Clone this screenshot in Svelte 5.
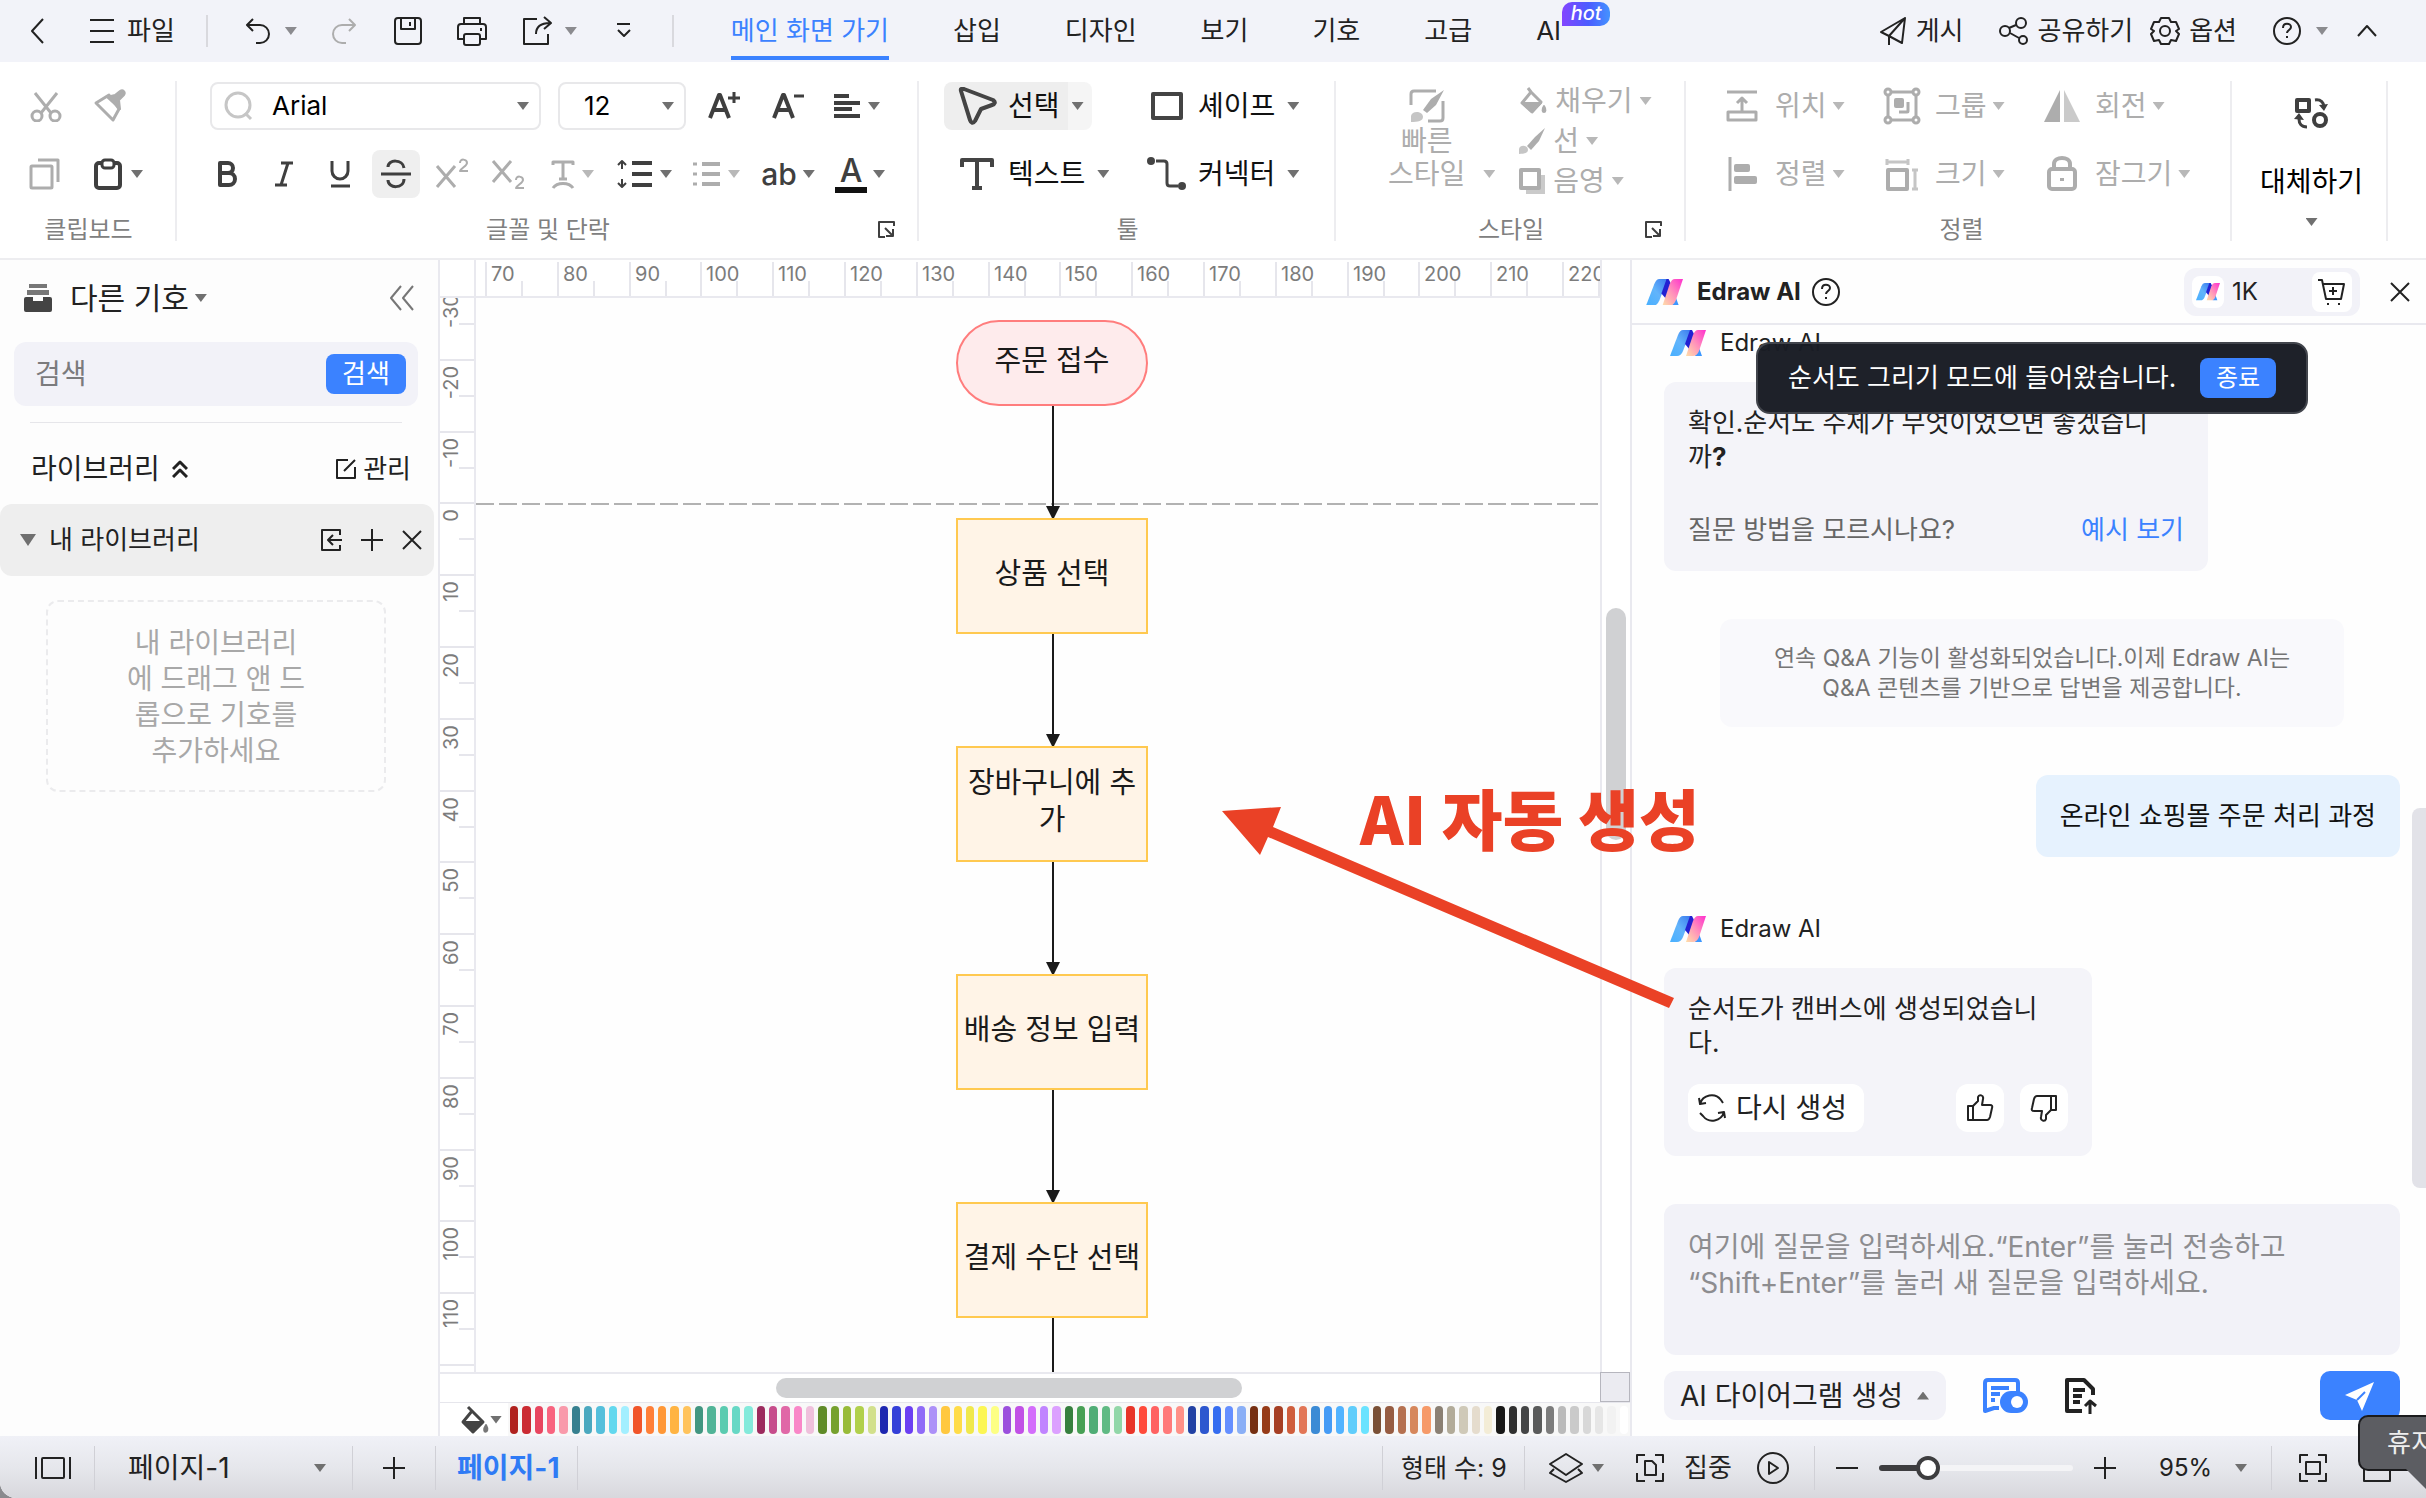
<script lang="ts">
	type Node = { text: string; kind: 'start' | 'step'; y: number; h: number };

	// width, height, body; stroked by default, solid parts set their own fill
	const icons: Record<string, [number, number, string]> = {
		back: [16, 28, '<path d="M14 2 3 14l11 12"/>'],
		menu: [26, 26, '<path d="M1 2h24M1 13h24M1 24h24"/>'],
		undo: [28, 28, '<path d="M9 2 3 8l6 6M3 8h13a9 9 0 0 1 0 18h-4"/>'],
		redo: [28, 28, '<path d="m19 2 6 6-6 6M25 8H12a9 9 0 0 0 0 18h4"/>'],
		save: [30, 30, '<rect x="2" y="2" width="26" height="26" rx="3"/><path d="M8 2v11h14V2M17 6v4"/>'],
		print: [32, 30, '<path d="M8 8V2h16v6M7 23H2V11a3 3 0 0 1 3-3h22a3 3 0 0 1 3 3v12h-5M25 12v3"/><rect x="8" y="18" width="16" height="11" rx="2"/>'],
		export: [32, 30, '<path d="M15 3H2v25h24V18M14 18c0-7 5-11 14-11M22 1l7 6-7 6"/>'],
		more: [16, 18, '<path d="M1 2h13M2 8l6 6 6-6"/>'],
		plane: [28, 30, '<path d="M26 2 2 16l8 4 13 7ZM26 2 10 20v9"/>'],
		share: [30, 30, '<circle cx="7" cy="15" r="5"/><circle cx="23" cy="7" r="5"/><circle cx="25" cy="24" r="4"/><path d="m11 12 7-3M12 17l9 5"/>'],
		gear: [30, 30, '<path d="M11 2h8l2 4 5 0 3 7-3 2 3 3-3 7-5-1-2 4h-8l-2-4-5 1-3-7 3-3-3-2 3-7 5 0Z"/><circle cx="15" cy="15" r="5"/>'],
		help: [30, 30, '<circle cx="15" cy="15" r="13"/><path d="M11 12c0-6 8-5 8-1 0 3-4 3-4 6M15 20v2"/>'],
		up: [22, 14, '<path d="m2 12 9-10 9 10"/>'],
		cut: [34, 32, '<path d="m6 3 16 20M28 3 12 23" stroke-width="3"/><circle cx="8" cy="26" r="5" stroke-width="3"/><circle cx="26" cy="26" r="5" stroke-width="3"/>'],
		brush: [36, 34, '<path d="M3 14 16 6l10 14-6 11Z" stroke-width="3"/><path d="m14 8 8-2 5-4c3-2 6 1 4 4l-5 5 1 9Z" fill="currentColor"/>'],
		copy: [32, 32, '<rect x="2" y="8" width="21" height="22" rx="1" stroke-width="3"/><path d="M9 2h20v22" stroke-width="3"/>'],
		paste: [30, 32, '<rect x="3" y="5" width="24" height="25" rx="3" stroke-width="4"/><rect x="9" y="2" width="12" height="8" rx="3" fill="#fff" stroke-width="3"/>'],
		search: [30, 30, '<circle cx="14" cy="14" r="12" stroke-width="3"/><path d="m21 22 6 6" stroke-width="3"/>'],
		bigger: [34, 30, '<path d="M3 27 12 4h1l9 23M6 19h13" stroke-width="4"/><path d="M27 1v11M21 7h12" stroke-width="3"/>'],
		smaller: [34, 30, '<path d="M3 27 12 4h1l9 23M6 19h13" stroke-width="4"/><path d="M23 5h10" stroke-width="3"/>'],
		align: [30, 24, '<path d="M2 2h15M2 9h26M2 15h18M2 22h26" stroke-width="4"/>'],
		bold: [24, 28, '<path d="M4 3v22h9a6 6 0 0 0 0-12H4h8a5 5 0 0 0 0-10Z" stroke-width="4"/>'],
		italic: [24, 28, '<path d="M9 3h12M3 25h12M16 3 9 25" stroke-width="3"/>'],
		underline: [24, 30, '<path d="M4 2v10a8 8 0 0 0 16 0V2M3 27h19" stroke-width="3"/>'],
		strike: [32, 30, '<path d="M24 9c-1-9-16-9-16-1M1 15h30M24 20c0 10-16 10-16 1" stroke-width="3"/>'],
		sup: [34, 32, '<path d="m2 8 18 21M20 8 2 29" stroke-width="3"/><path d="M25 5c0-5 7-4 7 0 0 3-6 5-7 8h8" stroke-width="2"/>'],
		sub: [34, 32, '<path d="M2 3 20 24M20 3 2 24" stroke-width="3"/><path d="M25 22c0-5 7-4 7 0 0 3-6 5-7 8h8" stroke-width="2"/>'],
		textfx: [26, 30, '<path d="M3 6V3h20v3M13 3v17M9 20h8M3 29c4-6 16-6 20 0" stroke-width="3"/>'],
		lines: [38, 30, '<path d="M16 4h20M16 15h20M16 26h20" stroke-width="4"/><path d="M6 2v8M2 6l4-4 4 4M6 20v8M2 24l4 4 4-4" stroke-width="2"/>'],
		bullets: [30, 26, '<path d="M10 3h18M10 13h18M10 23h18" stroke-width="4"/><path d="M1 3h4M1 13h4M1 23h4" stroke-width="3"/>'],
		pointer: [40, 38, '<path d="M4 4q-1-3 3-2l29 11c3 2 2 4-1 5l-11 4-6 12c-2 3-4 2-5-1Z" stroke-width="4"/>'],
		text: [36, 34, '<path d="M3 10V3h30v7M18 3v28M13 31h10" stroke-width="4"/>'],
		rect: [34, 30, '<rect x="3" y="3" width="28" height="24" stroke-width="4"/>'],
		connector: [42, 36, '<path d="M10 5h8q3 0 3 3v19q0 3 3 3h8" stroke-width="3"/><circle cx="5" cy="5" r="4" fill="currentColor" stroke="none"/><circle cx="36" cy="30" r="4" fill="currentColor" stroke="none"/>'],
		quick: [36, 34, '<path d="M2 16V5q0-3 3-3h22M34 12v17q0 3-3 3H19" stroke-width="3"/><path d="M35 1 22 10l-8 11 4 3 9-8Z" fill="currentColor" stroke="none"/><path d="M2 33v-6c1-6 12-5 12 1 0 4-5 5-12 5Z" fill="currentColor" stroke="none" opacity=".7"/>'],
		fill: [30, 30, '<path d="m10 2 3 4-9 11 10 9 9-10-10-10" stroke-width="3"/><path d="m5 17 9 9 9-9Z" fill="currentColor"/><path d="M26 20c5 8-5 8 0 0Z" fill="currentColor"/>'],
		line: [28, 28, '<path d="M27 1 17 10l-8 9 4 4 8-9Z" fill="currentColor" stroke="none"/><path d="M1 27v-5c1-5 9-4 9 1 0 3-4 4-9 4Z" fill="currentColor" stroke="none" opacity=".7"/>'],
		shadow: [28, 28, '<path d="M8 8h19v19H8Z" fill="currentColor" stroke="none" opacity=".65"/><rect x="3" y="3" width="18" height="18" fill="#fff" stroke-width="4"/>'],
		position: [34, 34, '<path d="M2 3h30M17 22V10M12 14l5-5 5 5" stroke-width="3"/><rect x="3" y="23" width="28" height="8" stroke-width="3"/>'],
		group: [38, 38, '<rect x="5" y="5" width="28" height="28" stroke-width="3"/><circle cx="5" cy="5" r="3" fill="#fff" stroke-width="3"/><circle cx="33" cy="5" r="3" fill="#fff" stroke-width="3"/><circle cx="5" cy="33" r="3" fill="#fff" stroke-width="3"/><circle cx="33" cy="33" r="3" fill="#fff" stroke-width="3"/><rect x="11" y="11" width="10" height="10" rx="2" fill="currentColor" stroke="none"/><path d="M25 15v9q0 1-1 1h-8" stroke-width="3"/>'],
		flip: [38, 34, '<path d="M17 1v32H1Z" fill="currentColor" stroke="none"/><path d="M21 1v32h16Z" fill="currentColor" stroke="none" opacity=".65"/>'],
		alignobj: [34, 36, '<path d="M5 1v34" stroke-width="3"/><rect x="9" y="8" width="16" height="8" rx="2" fill="currentColor" stroke="none"/><rect x="9" y="20" width="23" height="8" rx="2" fill="currentColor" stroke="none"/>'],
		size: [36, 34, '<rect x="4" y="13" width="19" height="19" stroke-width="4"/><path d="M3 5h21M3 2v6M24 2v6M31 13v19M28 13h6M28 32h6" stroke-width="3" opacity=".7"/>'],
		lock: [34, 36, '<rect x="4" y="13" width="26" height="20" rx="3" stroke-width="4"/><path d="M9 13V8c0-8 16-8 16 0v5M17 22v3" stroke-width="4"/>'],
		replace: [36, 34, '<rect x="3" y="4" width="12" height="11" stroke-width="4"/><circle cx="26" cy="24" r="6" stroke-width="4"/><path d="M21 4c6-1 9 3 9 7M13 31c-6 0-8-4-8-8" stroke-width="3"/><path d="m25 9 9-1-4 7ZM0 23l10 1-5-7Z" fill="currentColor" stroke="none"/>'],
		launcher: [18, 18, '<path d="M8 17H2V2h15v4M8 8l8 8M16 9v7H9"/>'],
		tray: [28, 28, '<path d="M5 0h18v4H5Z" fill="#777" stroke="none"/><path d="M3 6h22v5H3Z" fill="#777" stroke="none"/><path d="M2 13h7v4h10v-4h7q2 0 2 2v11q0 2-2 2H2q-2 0-2-2V15q0-2 2-2Z" fill="#444" stroke="none"/>'],
		collapse: [26, 26, '<path d="M12 1 2 13l10 12M24 1 14 13l10 12"/>'],
		dblup: [16, 18, '<path d="m1 9 7-7 7 7M1 17l7-7 7 7" stroke-width="3"/>'],
		manage: [22, 22, '<path d="M13 2H2v18h18V9M9 13 20 2"/>'],
		import: [24, 24, '<path d="M20 7V2H2v20h18v-5M22 12H8M13 7l-5 5 5 5"/>'],
		plus: [24, 24, '<path d="M12 1v22M1 12h22"/>'],
		close: [24, 24, '<path d="m3 3 18 18M21 3 3 21"/>'],
		cart: [30, 30, '<path d="M1 3h4l4 19h15l3-15H6M16 10v8M12 14h8M11 26v2M22 26v2"/>'],
		refresh: [30, 30, '<path d="M3 11a12 12 0 0 1 21-4l2 3M27 19a12 12 0 0 1-21 4l-3-3M2 5l1 6 6-1M28 25l-1-6-6 1"/>'],
		like: [28, 28, '<path d="M2 12h5v14H2ZM7 12l5-5V3c1-3 6-2 5 2l-1 6h8q3 0 2 3l-2 9q-1 3-3 3H7"/>'],
		dislike: [28, 28, '<path d="M26 16h-5V2h5ZM21 16l-5 5v4c-1 3-6 2-5-2l1-6H4q-3 0-2-3l2-9q1-3 3-3h14"/>'],
		bot: [46, 36, '<path d="M36 14V5q0-3-3-3H6Q3 2 3 5v28l9-3h5M9 10h18M9 16h9M9 22h4" stroke-width="4"/><rect x="18" y="13" width="28" height="22" rx="11" fill="currentColor" stroke="none"/><circle cx="35" cy="24" r="6" fill="#fff" stroke="none"/>'],
		upload: [34, 38, '<path d="M18 34H3V3h17l9 9v6M9 13h12M9 19h9M9 25h7" stroke-width="4"/><path d="M26 37V25M21 29l5-5 6 5" stroke-width="3"/>'],
		send: [30, 30, '<path d="M29 1 0 14l12 5 5 11Z" fill="currentColor" stroke="none"/><path d="m12 19 8-8" stroke="#3b82ff"/>'],
		bucket: [30, 30, '<path d="m8 2 4 4-9 11 10 10 10-10L12 6" stroke-width="3"/><path d="m3 17 10 10 10-10Z" fill="currentColor"/><path d="M26 20c5 9-6 9 0 0Z" fill="#777" stroke="#777"/>'],
		pages: [36, 24, '<rect x="7" y="2" width="22" height="20" rx="1"/><path d="M1 1v22M35 1v22"/>'],
		layers: [36, 32, '<path d="M18 2 34 12 18 23 2 12ZM6 17l-4 4 16 9 16-9-4-4"/>'],
		focus: [30, 30, '<path d="M10 2H2v8M20 2h8v8M10 28H2v-8M20 28h8v-8M10 8h7l4 4v10H10Z"/>'],
		play: [34, 34, '<circle cx="17" cy="17" r="15"/><path d="m13 11 9 6-9 6Z"/>'],
		minus: [24, 24, '<path d="M1 12h22"/>'],
		fit: [30, 30, '<path d="M10 2H2v8M20 2h8v8M10 28H2v-8M20 28h8v-8"/><rect x="8" y="9" width="14" height="12"/>'],
		window: [30, 30, '<path d="M2 2h26v26H2Z"/>']
	};

	const tabs = ['삽입', '디자인', '보기', '기호', '고급'];
	const arrange = [
		['position', '위치'],
		['group', '그룹'],
		['flip', '회전'],
		['alignobj', '정렬'],
		['size', '크기'],
		['lock', '잠그기']
	];

	const nodes: Node[] = [
		{ text: '주문 접수', kind: 'start', y: 22, h: 86 },
		{ text: '상품 선택', kind: 'step', y: 220, h: 116 },
		{ text: '장바구니에 추가', kind: 'step', y: 448, h: 116 },
		{ text: '배송 정보 입력', kind: 'step', y: 676, h: 116 },
		{ text: '결제 수단 선택', kind: 'step', y: 904, h: 116 },
		{ text: '', kind: 'step', y: 1132, h: 116 }
	];

	const step = 71.8;
	const hTicks = Array.from({ length: 16 }, (_, i) => ({ label: 70 + i * 10, at: Math.round(10 + i * step) }));
	const vTicks = Array.from({ length: 16 }, (_, i) => ({ label: -30 + i * 10, at: Math.round(-10 + i * step) }));

	const palette = (
		'b0221f cb2b33 e8455f f8647f f99aab 37808f 4ba8bf 55bfdb 63d8ee a3efff ' +
		'f1552a ff7f38 ff9736 ffb443 ffc35c 429681 51b497 5bcbb0 67d8c5 84eadb ' +
		'9c2b5e c64c8b e068a7 f987c8 efc0dc 5f8b28 76a12e 98bb38 b1d04c d2e08c ' +
		'1e27b0 3540d8 6b3ff2 8f6bf7 ad91f8 ffc840 ffdc48 f0e84c fcf654 fdff84 ' +
		'9b50dd c151e6 d36dfb c084ff dca0ff 37803f 48a055 50ad76 60ba84 92d7a8 ' +
		'e83529 ff4b3b ff6262 ff7a7a ff9087 2241a3 2d57cf 356df0 658fff 8aaff6 ' +
		'752f12 963b18 a63f24 cf5e3d e27656 3c8bd5 459bf5 52b3ff 60cdfb 6ae3ff ' +
		'7a5036 965c42 b57150 d6875c f69a69 8b8074 b2ab99 cfc9b8 e5dccd f3ecd6 ' +
		'171717 303030 444546 5a5b5b 7c7c7c bababa cacaca d8d8d8 e6e6e6 f2f2f2 ffffff'
	).split(' ');

	let zoom = $state(22);
	let query = $state('');
	let question = $state('');
</script>

{#snippet icon(name: string)}
	{@const [w, h, body] = icons[name]}
	<svg class="icon" width={w} height={h} viewBox="0 0 {w} {h}" aria-hidden="true">{@html body}</svg>
{/snippet}

{#snippet logo(w: number)}
	<svg class="logo" width={w} viewBox="0 0 36 26" aria-hidden="true">
		<defs>
			<linearGradient id="lg-blue" x1="1" y1="0" x2="0" y2="1">
				<stop offset="0" stop-color="#3a78ee" /><stop offset=".5" stop-color="#62b4fb" /><stop offset="1" stop-color="#48b0ff" />
			</linearGradient>
			<linearGradient id="lg-pink" x1="1" y1="0" x2="0" y2="1">
				<stop offset="0" stop-color="#ff2fce" /><stop offset=".5" stop-color="#ff8fbb" /><stop offset="1" stop-color="#ffe0a8" />
			</linearGradient>
		</defs>
		<path d="M28 15l4 11h-7z" fill="#3c97ff" />
		<path d="M13 0h8l-8 21q-2 5-6 5H0L8 5q2-5 5-5z" fill="url(#lg-blue)" />
		<path d="M20 0h2l3 6-5 14-5-6z" fill="#2320d2" />
		<path d="M28 0h8l-7 21q-2 5-6 5h-7l7-21q2-5 5-5z" fill="url(#lg-pink)" />
	</svg>
{/snippet}

{#snippet caret()}<span class="caret"></span>{/snippet}

<div class="app">
	<header class="topbar">
		<button class="back" aria-label="뒤로">{@render icon('back')}</button>
		<button class="file">{@render icon('menu')}파일</button>
		<span class="sep"></span>
		<div class="quick-access">
			<button class="wide" aria-label="실행 취소"><span>{@render icon('undo')}</span>{@render caret()}</button>
			<button class="off" aria-label="다시 실행">{@render icon('redo')}</button>
			<button aria-label="저장">{@render icon('save')}</button>
			<button aria-label="인쇄">{@render icon('print')}</button>
			<button class="wide" aria-label="내보내기"><span>{@render icon('export')}</span>{@render caret()}</button>
			<button aria-label="더 보기">{@render icon('more')}</button>
		</div>
		<span class="sep"></span>
		<nav class="tabs">
			<button class="active">메인 화면 가기</button>
			{#each tabs as tab}
				<button>{tab}</button>
			{/each}
			<button>AI<em class="hot">hot</em></button>
		</nav>
		<div class="top-actions">
			<button>{@render icon('plane')}게시</button>
			<button class="spaced">{@render icon('share')}공유하기</button>
			<button>{@render icon('gear')}옵션</button>
			<button class="spaced help" aria-label="도움말">{@render icon('help')}{@render caret()}</button>
			<button class="last" aria-label="리본 접기">{@render icon('up')}</button>
		</div>
	</header>

	<section class="ribbon">
		<div class="group clipboard">
			<div class="row off">
				<button aria-label="잘라내기">{@render icon('cut')}</button>
				<button aria-label="서식 복사">{@render icon('brush')}</button>
			</div>
			<div class="row">
				<button class="off" aria-label="복사">{@render icon('copy')}</button>
				<button aria-label="붙여넣기">{@render icon('paste')}{@render caret()}</button>
			</div>
			<h2>클립보드</h2>
		</div>

		<div class="group font">
			<div class="row">
				<label class="combo family">
					{@render icon('search')}
					<select aria-label="글꼴"><option>Arial</option></select>
					{@render caret()}
				</label>
				<label class="combo points">
					<select aria-label="글꼴 크기"><option>12</option></select>
					{@render caret()}
				</label>
				<button class="mid" aria-label="글꼴 크게">{@render icon('bigger')}</button>
				<button class="mid" aria-label="글꼴 작게">{@render icon('smaller')}</button>
				<button class="drop" aria-label="맞춤">{@render icon('align')}{@render caret()}</button>
			</div>
			<div class="row">
				<button class="cell" aria-label="굵게">{@render icon('bold')}</button>
				<button class="cell" aria-label="기울임">{@render icon('italic')}</button>
				<button class="cell" aria-label="밑줄">{@render icon('underline')}</button>
				<button class="cell on" aria-label="취소선"><span>{@render icon('strike')}</span></button>
				<button class="cell off" aria-label="위 첨자">{@render icon('sup')}</button>
				<button class="cell off" aria-label="아래 첨자">{@render icon('sub')}</button>
				<button class="drop off" aria-label="텍스트 효과">{@render icon('textfx')}{@render caret()}</button>
				<button class="drop" aria-label="줄 간격">{@render icon('lines')}{@render caret()}</button>
				<button class="drop off" aria-label="글머리 기호">{@render icon('bullets')}{@render caret()}</button>
				<button class="drop case">ab{@render caret()}</button>
				<button class="drop" aria-label="글꼴 색"><span class="ink">A</span>{@render caret()}</button>
			</div>
			<h2>글꼴 및 단락</h2>
			<button class="launch" aria-label="글꼴 설정">{@render icon('launcher')}</button>
		</div>

		<div class="group tools">
			<div class="row">
				<button class="tool picked"><span class="glyph">{@render icon('pointer')}</span>선택{@render caret()}</button>
				<button class="tool"><span class="glyph">{@render icon('rect')}</span>셰이프{@render caret()}</button>
			</div>
			<div class="row">
				<button class="tool"><span class="glyph">{@render icon('text')}</span>텍스트{@render caret()}</button>
				<button class="tool"><span class="glyph">{@render icon('connector')}</span>커넥터{@render caret()}</button>
			</div>
			<h2>툴</h2>
		</div>

		<div class="group style">
			<div class="body off">
				<button class="quick-style">
					{@render icon('quick')}
					<span>빠른<br />스타일</span>
				</button>
				<span class="quick-caret">{@render caret()}</span>
				<div class="stack">
					<button>{@render icon('fill')}채우기{@render caret()}</button>
					<button>{@render icon('line')}선{@render caret()}</button>
					<button>{@render icon('shadow')}음영{@render caret()}</button>
				</div>
			</div>
			<h2>스타일</h2>
			<button class="launch" aria-label="스타일 설정">{@render icon('launcher')}</button>
		</div>

		<div class="group arrange">
			<div class="grid off">
				{#each arrange as [name, label]}
					<button><span class="glyph">{@render icon(name)}</span>{label}{@render caret()}</button>
				{/each}
			</div>
			<h2>정렬</h2>
		</div>

		<div class="group replace">
			<button>{@render icon('replace')}<span>대체하기</span>{@render caret()}</button>
		</div>
	</section>

	<main class="workspace">
		<aside class="library">
			<div class="lib-head">
				{@render icon('tray')}
				<button class="title">다른 기호{@render caret()}</button>
				<button class="fold" aria-label="패널 접기">{@render icon('collapse')}</button>
			</div>
			<form class="search" onsubmit={(e) => e.preventDefault()}>
				<input type="text" aria-label="검색" placeholder="검색" bind:value={query} />
				<button>검색</button>
			</form>
			<hr />
			<div class="lib-bar">
				<button>라이브러리{@render icon('dblup')}</button>
				<button class="manage">{@render icon('manage')}관리</button>
			</div>
			<div class="my-lib">
				<button class="name"><span class="fold-mark"></span>내 라이브러리</button>
				<button aria-label="가져오기">{@render icon('import')}</button>
				<button aria-label="추가">{@render icon('plus')}</button>
				<button aria-label="닫기">{@render icon('close')}</button>
			</div>
			<p class="dropzone">내 라이브러리<br />에 드래그 앤 드<br />롭으로 기호를<br />추가하세요</p>
		</aside>

		<section class="editor">
			<div class="corner"></div>
			<svg class="ruler-h" width="100%" height="36">
				{#each hTicks as t}
					<path d="M{t.at} 2v36M{t.at + 36} 21v15" />
					<text x={t.at + 5} y="21">{t.label}</text>
				{/each}
			</svg>
			<div class="ruler-gap"></div>
			<div class="ruler-v">
				<svg width="34" height="100%">
					{#each vTicks as t}
						<path d="M0 {t.at}h34M19 {t.at + 36}h15" />
						<text transform="translate(18 {t.at + 6}) rotate(-90)">{t.label}</text>
					{/each}
				</svg>
			</div>
			<div class="canvas">
				<svg class="edges" width="100%" height="100%">
					<path class="page-edge" d="M0 206H4000" />
					{#each nodes.slice(1) as node, i}
						<path class="edge" d="M577 {nodes[i].y + nodes[i].h}V{node.y}" />
						<path d="M570 {node.y - 12}h14l-7 14z" />
					{/each}
				</svg>
				{#each nodes as node}
					<div class="node {node.kind}" style="top: {node.y}px; height: {node.h}px">{node.text}</div>
				{/each}
			</div>
			<div class="scroll-v"><span></span></div>
			<div class="scroll-h"><span></span></div>
			<div class="scroll-corner"></div>
			<div class="palette">
				<button class="bucket" aria-label="채우기 색">{@render icon('bucket')}{@render caret()}</button>
				<div class="swatches">
					{#each palette as c}
						<button aria-label="#{c}" style="background: #{c}"></button>
					{/each}
				</div>
			</div>
		</section>

		<aside class="ai">
			<header>
				{@render logo(37)}
				<h1>Edraw AI</h1>
				<button aria-label="도움말">{@render icon('help')}</button>
				<div class="credit">
					<span class="chip">{@render logo(24)}</span>
					<span>1K</span>
					<button aria-label="구매">{@render icon('cart')}</button>
				</div>
				<button class="close" aria-label="닫기">{@render icon('close')}</button>
			</header>

			<div class="chat">
				<p class="sender">{@render logo(36)}Edraw AI</p>
				<div class="bubble first">
					<p>확인.순서도 주제가 무엇이었으면 좋겠습니<br />까<b>?</b></p>
					<div class="hint"><span>질문 방법을 모르시나요?</span><a href="#example">예시 보기</a></div>
				</div>
				<p class="notice">연속 Q&amp;A 기능이 활성화되었습니다.이제 Edraw AI는<br />Q&amp;A 콘텐츠를 기반으로 답변을 제공합니다.</p>
				<p class="mine">온라인 쇼핑몰 주문 처리 과정</p>
				<p class="sender">{@render logo(36)}Edraw AI</p>
				<div class="bubble second">
					<p>순서도가 캔버스에 생성되었습니<br />다.</p>
					<div class="feedback">
						<button class="again">{@render icon('refresh')}다시 생성</button>
						<button aria-label="좋아요">{@render icon('like')}</button>
						<button aria-label="싫어요">{@render icon('dislike')}</button>
					</div>
				</div>
				<span class="chat-thumb"></span>
			</div>

			<div class="composer">
				<textarea
					aria-label="질문"
					placeholder="여기에 질문을 입력하세요.“Enter”를 눌러 전송하고 “Shift+Enter”를 눌러 새 질문을 입력하세요."
					bind:value={question}
				></textarea>
				<div class="composer-bar">
					<label class="mode">
						<select aria-label="생성 모드"><option>AI 다이어그램 생성</option></select>
						<span class="caret flip"></span>
					</label>
					<button class="blue" aria-label="연속 대화">{@render icon('bot')}</button>
					<button aria-label="파일 올리기">{@render icon('upload')}</button>
					<button class="send" aria-label="전송">{@render icon('send')}</button>
				</div>
			</div>

			<div class="toast" role="status">
				순서도 그리기 모드에 들어왔습니다.
				<button>종료</button>
			</div>
		</aside>
	</main>

	<footer class="status">
		<button class="pages" aria-label="페이지 목록">{@render icon('pages')}</button>
		<span class="sep"></span>
		<label class="page-select">
			<select aria-label="페이지"><option>페이지-1</option></select>
			{@render caret()}
		</label>
		<span class="sep"></span>
		<button class="add" aria-label="페이지 추가">{@render icon('plus')}</button>
		<span class="sep"></span>
		<button class="page-tab">페이지-1</button>
		<span class="sep"></span>
		<div class="status-right">
			<span class="sep"></span>
			<span class="count">형태 수: 9</span>
			<span class="sep"></span>
			<button class="layers" aria-label="레이어">{@render icon('layers')}{@render caret()}</button>
			<button class="focus">{@render icon('focus')}집중</button>
			<button class="play" aria-label="재생">{@render icon('play')}</button>
			<span class="sep"></span>
			<div class="zoom">
				<button aria-label="축소">{@render icon('minus')}</button>
				<input type="range" aria-label="확대/축소" min="0" max="100" bind:value={zoom} />
				<button aria-label="확대">{@render icon('plus')}</button>
			</div>
			<label class="percent">
				<select aria-label="배율"><option>95%</option></select>
				{@render caret()}
			</label>
			<span class="sep"></span>
			<button class="view" aria-label="화면에 맞춤">{@render icon('fit')}</button>
			<button class="view" aria-label="전체 화면">{@render icon('window')}</button>
		</div>
	</footer>

	<svg class="pointer-arrow" width="460" height="200" viewBox="0 0 460 200" aria-hidden="true">
		<path d="M0 4 59 0 51 20 452 191 447 201 46 30 38 48z" />
	</svg>
	<p class="callout">AI 자동 생성</p>
	<div class="dock-tip">휴지통</div>
</div>

<style>
	:global(body) {
		margin: 0;
		background: #8a8a8e;
	}
	.app,
	.app :global(*) {
		box-sizing: border-box;
	}
	.app {
		position: relative;
		display: flex;
		flex-direction: column;
		min-height: 100vh;
		overflow: hidden;
		background: #fff;
		border-bottom-left-radius: 16px;
		color: #222;
		font: 26px/34px Inter, 'Noto Sans CJK KR', sans-serif;
		white-space: nowrap;
	}
	button,
	input,
	select,
	textarea {
		font: inherit;
		color: inherit;
		background: none;
		border: 0;
		padding: 0;
		margin: 0;
		outline: 0;
	}
	button {
		display: flex;
		align-items: center;
	}
	select {
		appearance: none;
		flex: 1;
		min-width: 0;
	}
	p,
	h1,
	h2 {
		margin: 0;
		font-weight: 400;
	}
	.icon,
	.logo {
		display: block;
		flex: none;
	}
	.icon {
		fill: none;
		stroke: currentColor;
		stroke-width: 2;
		stroke-linejoin: round;
	}
	.caret {
		flex: none;
		width: 12px;
		height: 8px;
		background: #707070;
		clip-path: polygon(0 0, 100% 0, 50% 100%);
	}
	.caret.flip {
		clip-path: polygon(50% 0, 100% 100%, 0 100%);
	}
	.off {
		color: #adadad;
	}
	.off .caret {
		background: #b8b8b8;
	}
	.sep {
		flex: none;
		width: 2px;
		height: 32px;
		background: #d9d9de;
	}

	/* top bar */
	.topbar {
		display: flex;
		align-items: center;
		height: 62px;
		padding: 0 48px 0 29px;
		background: #f2f3f9;
	}
	.file {
		gap: 12px;
		margin: 0 31px 0 44px;
	}
	.quick-access {
		display: flex;
		margin: 0 16px;
	}
	.quick-access button {
		width: 64px;
		height: 48px;
		justify-content: center;
	}
	.quick-access .wide {
		width: 88px;
		padding-left: 7px;
		justify-content: flex-start;
	}
	.wide span:first-child {
		display: flex;
		justify-content: center;
		width: 54px;
	}
	.topbar .caret {
		background: #8b8b8f;
	}
	.tabs {
		display: flex;
		gap: 64px;
		margin-left: 57px;
		align-self: stretch;
	}
	.tabs button {
		position: relative;
	}
	.tabs .active {
		color: #3b82ff;
	}
	.tabs .active::after {
		content: '';
		position: absolute;
		inset: auto 0 2px;
		height: 4px;
		background: #3b82ff;
	}
	.hot {
		position: absolute;
		left: 26px;
		top: 2px;
		width: 48px;
		height: 24px;
		border-radius: 10px 10px 10px 0;
		background: linear-gradient(90deg, #8344ff, #4b5cff 55%, #4493ff);
		color: #fff;
		font-size: 20px;
		line-height: 23px;
		font-weight: 500;
		text-align: center;
	}
	.top-actions {
		display: flex;
		align-items: center;
		gap: 17px;
		margin-left: auto;
	}
	.top-actions button {
		gap: 9px;
	}
	.top-actions .spaced {
		margin-left: 18px;
	}
	.top-actions .help {
		gap: 14px;
	}
	.top-actions .last {
		margin-left: 11px;
	}

	/* ribbon */
	.ribbon {
		display: flex;
		height: 198px;
		padding-top: 10px;
		border-bottom: 2px solid #ededf0;
		font-size: 28px;
	}
	.group {
		position: relative;
		flex: none;
		display: flex;
		flex-direction: column;
		color: #3f3f3f;
	}
	.group::after {
		content: '';
		position: absolute;
		right: 0;
		top: 9px;
		width: 2px;
		height: 160px;
		background: #ededf0;
	}
	.group h2 {
		height: 44px;
		line-height: 44px;
		font-size: 24px;
		color: #808080;
		text-align: center;
	}
	.row {
		display: flex;
		align-items: center;
		height: 68px;
	}
	.launch {
		position: absolute;
		right: 24px;
		top: 148px;
	}
	.clipboard {
		width: 177px;
	}
	.clipboard .row {
		gap: 30px;
		padding-left: 29px;
	}
	.clipboard .row .off,
	.clipboard .row.off button:first-child {
		width: 34px;
	}
	.clipboard button {
		gap: 8px;
	}
	.font {
		width: 742px;
	}
	.font .row {
		padding-left: 23px;
	}
	.combo {
		display: flex;
		align-items: center;
		height: 48px;
		border: 2px solid #e8e8ea;
		border-radius: 8px;
		color: #000;
		font-size: 26px;
	}
	.combo .icon {
		color: #c6c6c6;
	}
	.family {
		width: 331px;
		margin: 0 17px 0 10px;
		padding: 0 10px 0 12px;
		gap: 18px;
	}
	.points {
		width: 128px;
		margin-right: 6px;
		padding: 0 10px 0 24px;
	}
	.mid,
	.cell,
	.drop {
		justify-content: center;
		width: 64px;
		height: 48px;
	}
	.cell {
		width: 56px;
	}
	.drop {
		width: 72px;
		gap: 6px;
	}
	.on span {
		display: flex;
		align-items: center;
		justify-content: center;
		width: 48px;
		height: 48px;
		border-radius: 8px;
		background: #efefef;
	}
	.case {
		font-size: 30px;
		font-weight: 500;
	}
	.ink {
		width: 32px;
		border-bottom: 6px solid #111;
		font-size: 32px;
		line-height: 32px;
		font-weight: 500;
	}
	.tools {
		width: 417px;
		color: #111;
	}
	.tools .row {
		display: grid;
		grid-template-columns: 190px 190px;
		padding-left: 25px;
	}
	.tool {
		justify-self: start;
		height: 48px;
		gap: 12px;
		padding: 0 8px 0 14px;
		border-radius: 8px;
	}
	.tool.picked {
		background: linear-gradient(90deg, #eee 124px, #f5f5f5 124px);
	}
	.glyph {
		display: flex;
		justify-content: center;
		width: 38px;
		color: #444;
	}
	.off .glyph {
		color: inherit;
	}
	.style {
		width: 350px;
	}
	.style .body {
		display: flex;
		height: 136px;
		padding: 9px 0 0 52px;
	}
	.quick-style {
		flex-direction: column;
		padding-top: 8px;
		gap: 2px;
		line-height: 33px;
	}
	.quick-caret {
		padding: 89px 0 0 18px;
	}
	.quick-caret .caret {
		display: block;
	}
	.stack {
		padding-left: 23px;
	}
	.stack button {
		height: 40px;
		gap: 7px;
	}
	.arrange {
		width: 546px;
		padding-left: 37px;
	}
	.arrange .grid {
		display: grid;
		grid-template: 68px 68px / 160px 160px 200px;
	}
	.arrange .glyph {
		margin-right: 8px;
	}
	.arrange button {
		gap: 6px;
	}
	.arrange h2 {
		padding-right: 32px;
	}
	.replace {
		width: 156px;
		color: #000;
	}
	.replace button {
		flex-direction: column;
		padding: 24px 0 0 3px;
	}
	.replace .icon {
		color: #3f3f3f;
	}
	.replace span:not(.caret) {
		margin: 35px 0 19px;
	}

	/* library */
	.workspace {
		flex: 1;
		display: flex;
		min-height: 0;
	}
	.library {
		flex: none;
		width: 438px;
		background: #fdfdfd;
	}
	.lib-head {
		display: flex;
		align-items: center;
		height: 76px;
		padding: 0 23px 0 24px;
		font-size: 30px;
	}
	.lib-head .title {
		gap: 6px;
		margin: 0 auto 0 18px;
	}
	.fold {
		color: #777;
	}
	.search {
		display: flex;
		align-items: center;
		height: 64px;
		margin: 6px 20px 0 14px;
		padding: 0 12px 0 21px;
		border-radius: 12px;
		background: #f2f2f8;
	}
	.search input {
		flex: 1;
		min-width: 0;
		font-size: 28px;
	}
	input::placeholder {
		color: #7b7b7d;
	}
	.search button {
		justify-content: center;
		width: 80px;
		height: 40px;
		border-radius: 8px;
		background: #3b82ff;
		color: #fff;
	}
	hr {
		height: 1px;
		margin: 16px 36px 0 30px;
		border: 0;
		background: #e6e6ea;
	}
	.lib-bar {
		display: flex;
		align-items: center;
		justify-content: space-between;
		height: 81px;
		padding: 10px 27px 0 31px;
		font-size: 28px;
	}
	.lib-bar button {
		gap: 12px;
	}
	.lib-bar .manage {
		gap: 6px;
		font-size: 26px;
	}
	.my-lib {
		display: flex;
		align-items: center;
		gap: 16px;
		height: 72px;
		margin-right: 4px;
		padding: 0 10px 0 20px;
		border-radius: 12px;
		background: #eee;
	}
	.my-lib .name {
		margin-right: auto;
		gap: 13px;
	}
	.fold-mark {
		width: 16px;
		height: 12px;
		background: #6f6f6f;
		clip-path: polygon(0 0, 100% 0, 50% 100%);
	}
	.dropzone {
		margin: 24px 52px 0 46px;
		padding: 23px 0 21px;
		border: 2px dashed #ebebed;
		border-radius: 12px;
		color: #a8a8a8;
		font-size: 28px;
		line-height: 36px;
		text-align: center;
	}

	/* editor */
	.editor {
		flex: 1;
		min-width: 0;
		display: grid;
		grid-template: 38px minmax(0, 1fr) 30px 34px / 36px minmax(0, 1fr) 30px;
		border-left: 2px solid #e9e9ef;
	}
	.corner,
	.ruler-v {
		border-right: 2px solid #e9e9ef;
	}
	.corner,
	.ruler-h {
		height: 38px;
		border-bottom: 2px solid #e9e9ef;
	}
	.ruler-gap,
	.scroll-v {
		border-left: 2px solid #e9e9ef;
	}
	.ruler-h,
	.ruler-v svg {
		display: block;
		overflow: hidden;
		font-size: 20px;
		fill: #7c7c7c;
	}
	.ruler-h path,
	.ruler-v path {
		stroke: #e6e6ec;
		stroke-width: 2;
	}
	.ruler-v {
		overflow: hidden;
	}
	.ruler-v text {
		text-anchor: end;
	}
	.canvas {
		position: relative;
		overflow: hidden;
		background: #fefefe;
	}
	.edges {
		position: absolute;
		inset: 0;
		fill: #1a1a1a;
	}
	.edge {
		stroke: #1a1a1a;
		stroke-width: 2;
	}
	.page-edge {
		stroke: #b2b2b2;
		stroke-width: 2;
		stroke-dasharray: 18 5;
	}
	.node {
		position: absolute;
		left: 480px;
		width: 192px;
		display: flex;
		align-items: center;
		justify-content: center;
		padding-bottom: 6px;
		border: 2px solid #ffc950;
		background: #fff4e7;
		color: #1a1a1a;
		font-size: 29px;
		line-height: 37px;
		text-align: center;
		white-space: normal;
		word-break: break-all;
	}
	.node.start {
		border-color: #ff7d7d;
		border-radius: 43px;
		background: #feebec;
	}
	.scroll-v {
		padding: 310px 4px 0;
	}
	.scroll-v span {
		display: block;
		height: 232px;
		border-radius: 10px;
		background: #d0d1d3;
	}
	.scroll-h {
		grid-column: 1 / 3;
		padding: 4px 0 0 336px;
		border-top: 2px solid #e9e9ef;
	}
	.scroll-h span {
		display: block;
		width: 466px;
		height: 20px;
		border-radius: 10px;
		background: #d0d1d3;
	}
	.scroll-corner {
		border: 1px solid #b6b6be;
		background: #ebebf1;
	}
	.palette {
		grid-column: 1 / 4;
		display: flex;
		border-top: 1px solid #e6e6ec;
	}
	.bucket {
		width: 68px;
		padding-left: 20px;
		color: #444;
	}
	.swatches {
		flex: 1;
		display: flex;
		gap: 4px;
		padding: 3px 2px 2px;
		background: #f8f8f8;
	}
	.swatches button {
		flex: 1;
		border-radius: 4px;
	}

	/* assistant */
	.ai {
		position: relative;
		flex: none;
		display: flex;
		flex-direction: column;
		width: 796px;
		border-left: 2px solid #e9e9ef;
		background: #fefefe;
	}
	.ai header {
		display: flex;
		align-items: center;
		height: 65px;
		padding: 1px 14px 0 14px;
		border-bottom: 2px solid #e9e9ef;
		font-size: 24px;
	}
	.ai h1 {
		margin: 0 10px 0 14px;
		font-size: 24px;
		font-weight: 700;
	}
	.credit {
		display: flex;
		align-items: center;
		gap: 8px;
		width: 176px;
		height: 48px;
		margin: 0 28px 0 auto;
		padding: 0 8px;
		border-radius: 12px;
		background: #f2f2f8;
	}
	.credit .chip,
	.credit button {
		display: flex;
		align-items: center;
		justify-content: center;
		width: 32px;
		height: 32px;
		border-radius: 8px;
		background: #fff;
	}
	.credit button {
		width: 40px;
		height: 40px;
		margin-left: auto;
	}
	.chat {
		position: relative;
		flex: 1;
		min-height: 0;
		padding: 1px 26px 0 32px;
	}
	.sender {
		display: flex;
		align-items: center;
		gap: 14px;
		padding-left: 6px;
		margin-bottom: 22px;
		font-size: 24px;
	}
	.bubble {
		padding: 24px;
		border-radius: 12px;
		background: #f4f4f9;
	}
	.first {
		width: 544px;
	}
	.second {
		width: 428px;
	}
	.hint {
		display: flex;
		justify-content: space-between;
		margin-top: 39px;
		color: #666;
	}
	.hint a {
		color: #3b82ff;
		text-decoration: none;
	}
	.notice {
		margin: 48px 56px;
		padding: 24px 0;
		border-radius: 12px;
		background: #f9f9fc;
		color: #757575;
		font-size: 23px;
		line-height: 30px;
		text-align: center;
	}
	.mine {
		width: fit-content;
		margin: 0 0 55px auto;
		padding: 24px;
		border-radius: 12px;
		background: #e6f2fe;
		color: #111;
	}
	.feedback {
		display: flex;
		gap: 16px;
		margin-top: 24px;
	}
	.feedback button {
		justify-content: center;
		width: 48px;
		height: 48px;
		border-radius: 12px;
		background: #fff;
		font-size: 28px;
	}
	.feedback .again {
		justify-content: flex-start;
		gap: 9px;
		width: 176px;
		margin-right: auto;
		padding-left: 9px;
	}
	.chat-thumb {
		position: absolute;
		right: 0;
		top: 483px;
		width: 14px;
		height: 380px;
		border-radius: 8px 0 0 8px;
		background: #e2e2e8;
	}
	.composer {
		padding: 0 26px 16px 32px;
	}
	textarea {
		display: block;
		width: 100%;
		height: 151px;
		padding: 25px 90px 0 24px;
		border-radius: 12px;
		background: #f2f2f8;
		font-size: 28px;
		line-height: 36px;
		resize: none;
		overflow: hidden;
	}
	textarea::placeholder {
		color: #8d8d90;
	}
	.composer-bar {
		display: flex;
		align-items: center;
		gap: 36px;
		height: 49px;
		margin-top: 16px;
		font-size: 28px;
	}
	.mode {
		display: flex;
		align-items: center;
		width: 282px;
		height: 49px;
		padding: 0 17px 0 16px;
		border-radius: 12px;
		background: #f2f2f8;
	}
	.blue {
		color: #3b82ff;
	}
	.send {
		justify-content: center;
		width: 80px;
		height: 49px;
		margin-left: auto;
		border-radius: 10px;
		background: #3b82ff;
		color: #fff;
	}
	.toast {
		position: absolute;
		right: 118px;
		top: 82px;
		display: flex;
		align-items: center;
		justify-content: space-between;
		width: 552px;
		height: 72px;
		padding: 0 30px;
		border: 2px solid #42454c;
		border-radius: 14px;
		background: #191d25fa;
		color: #fff;
	}
	.toast button {
		justify-content: center;
		width: 76px;
		height: 40px;
		border-radius: 8px;
		background: #3b82ff;
		font-size: 24px;
	}

	/* status bar */
	.status {
		display: flex;
		align-items: center;
		height: 62px;
		padding-top: 2px;
		background: linear-gradient(#f0f1f7, #e6e7ec 50%, #d8d8dd);
	}
	.status .sep {
		width: 1px;
		height: 44px;
		background: #d0d0d6;
	}
	.pages {
		width: 94px;
		padding-left: 35px;
	}
	.page-select {
		display: flex;
		align-items: center;
		width: 257px;
		padding: 0 26px 0 33px;
		font-size: 28px;
	}
	.add {
		justify-content: center;
		width: 82px;
	}
	.page-tab {
		padding: 0 18px 0 21px;
		color: #2f7bf5;
		font-size: 28px;
		font-weight: 700;
	}
	.status-right {
		display: flex;
		align-items: center;
		margin-left: auto;
	}
	.count {
		width: 141px;
		padding-left: 18px;
		font-size: 25px;
	}
	.layers {
		gap: 8px;
		width: 110px;
		padding-left: 23px;
	}
	.focus {
		gap: 19px;
		width: 121px;
	}
	.play {
		width: 58px;
	}
	.zoom {
		display: flex;
		align-items: center;
		gap: 20px;
		padding-left: 20px;
	}
	.zoom input {
		appearance: none;
		width: 194px;
		height: 24px;
	}
	.zoom input::-webkit-slider-runnable-track {
		height: 6px;
		border-radius: 3px;
		background: linear-gradient(90deg, #3d3d3f 25%, #f4f4f6 25%);
	}
	.zoom input::-webkit-slider-thumb {
		appearance: none;
		width: 24px;
		height: 24px;
		margin-top: -9px;
		border: 4px solid #3d3d3f;
		border-radius: 50%;
		background: #fff;
	}
	.percent {
		display: flex;
		align-items: center;
		width: 154px;
		padding: 0 24px 0 42px;
		font-size: 24px;
	}
	.view {
		width: 64px;
	}
	.view:nth-last-child(2) {
		margin-left: 26px;
	}

	/* marks lying over the window */
	.pointer-arrow {
		position: absolute;
		left: 1222px;
		top: 807px;
		fill: #ea4126;
		overflow: visible;
	}
	.callout {
		position: absolute;
		left: 1360px;
		top: 780px;
		color: #ea4126;
		font: 900 66px/72px 'Noto Sans CJK KR', sans-serif;
	}
	.dock-tip {
		position: absolute;
		right: -80px;
		bottom: 27px;
		width: 148px;
		height: 56px;
		padding-left: 27px;
		border: 2px solid #1b1b1d;
		border-radius: 10px;
		background: #5c5d62;
		color: #eee;
		line-height: 52px;
	}
	.dock-tip::after {
		content: '';
		position: absolute;
		left: 46px;
		top: 52px;
		width: 56px;
		height: 28px;
		background: #5c5d62;
		clip-path: polygon(0 0, 100% 0, 50% 100%);
	}
</style>
